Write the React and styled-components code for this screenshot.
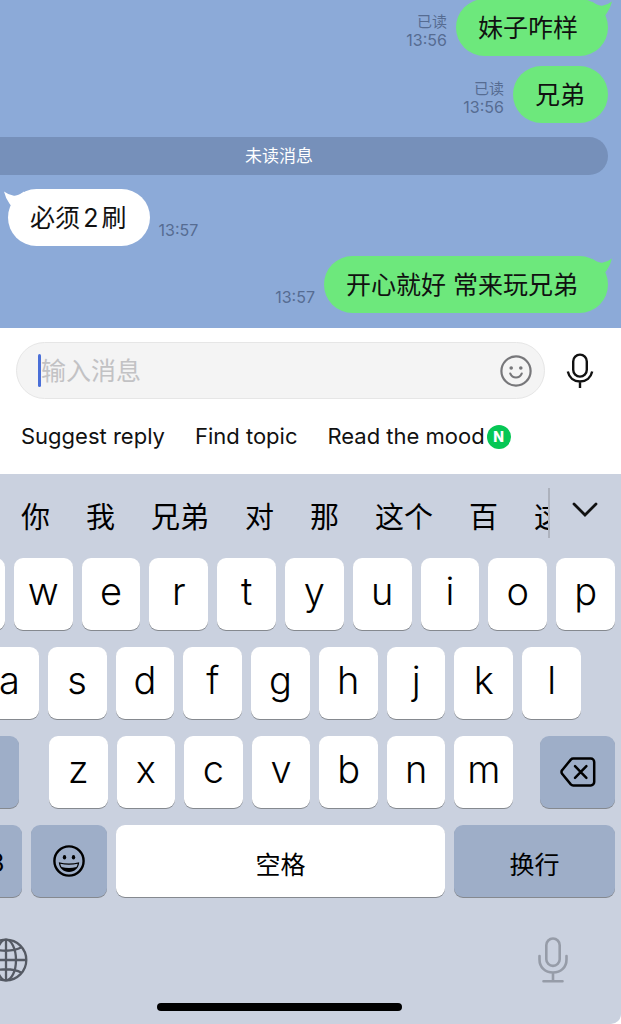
import { useState } from 'react'
import styled, { createGlobalStyle } from 'styled-components'

const GlobalStyle = createGlobalStyle`
  * {
    box-sizing: border-box;
  }

  body {
    margin: 0;
    background: #ffffff;
    font-family: Inter, "Noto Sans CJK SC", sans-serif;
    color: #111111;
  }

  button {
    font-family: inherit;
    color: inherit;
    border: none;
    padding: 0;
    background: none;
    cursor: pointer;
  }
`;

const Viewport = styled.div`
  overflow: hidden;
`;

/* The phone screen runs past the left edge of the window */
const Screen = styled.main`
  margin-left: -62px;
`;

const Chat = styled.section`
  display: flex;
  flex-direction: column;
  gap: 10px;
  margin-top: -1px;
  padding: 0 13px 15px 70px;
  background: #8caad8;
`;

const MessageRow = styled.div`
  display: flex;
  flex-direction: ${props => props.$mine ? 'row-reverse' : 'row'};
  align-items: flex-end;
  gap: 9px;
`;

const Bubble = styled.div`
  position: relative;
  padding: 13px ${props => props.$mine && props.$tail ? '30px' : '23px'} 11px 22px;
  border-radius: 29px;
  background: ${props => props.$mine ? '#6de87c' : '#ffffff'};
  font-size: 25px;
  line-height: 33px;
  white-space: nowrap;
  text-autospace: normal;
`;

const Tail = styled.svg`
  position: absolute;
  top: 0;
  ${props => props.$mine ? 'right: -4px;' : 'left: -4px; transform: scaleX(-1);'}
  width: 28px;
  height: 20px;
  fill: ${props => props.$mine ? '#6de87c' : '#ffffff'};
`;

const Meta = styled.div`
  display: flex;
  flex-direction: column;
  align-items: flex-end;
  padding-bottom: 6px;
  font-size: 16px;
  line-height: 19px;
  color: #566c92;
`;

const ReadLabel = styled.span`
  font-size: 15px;
`;

const UnreadDivider = styled.div`
  margin: 4px 0 4px -58px;
  border-radius: 19px;
  background: #7690ba;
  color: #ffffff;
  font-size: 17px;
  line-height: 38px;
  text-align: center;
`;

const Composer = styled.section`
  padding: 14px 27px 22px 78px;
  background: #ffffff;
`;

const InputRow = styled.div`
  display: flex;
  align-items: center;
  gap: 21px;
`;

const InputBox = styled.div`
  flex: 1;
  display: flex;
  align-items: center;
  height: 57px;
  padding: 0 12px 0 21px;
  border: 1px solid #e6e6e6;
  border-radius: 29px;
  background: #f4f4f4;
`;

const Caret = styled.span`
  width: 3px;
  height: 33px;
  border-radius: 2px;
  background: #4a6fd8;
`;

const TextInput = styled.input`
  flex: 1;
  min-width: 0;
  height: 36px;
  padding: 0;
  border: none;
  outline: none;
  background: transparent;
  font-family: inherit;
  font-size: 25px;
  color: #111111;

  &::placeholder {
    color: #c2c2c4;
    opacity: 1;
  }
`;

const IconButton = styled.button`
  display: flex;
  color: ${props => props.$color || '#111111'};
`;

const Suggestions = styled.div`
  display: flex;
  align-items: center;
  gap: 30px;
  margin-top: 22px;
  padding-left: 5px;
`;

const Suggestion = styled.button`
  display: flex;
  align-items: center;
  gap: 2px;
  font-size: 22px;
  line-height: 31px;
  white-space: nowrap;
`;

const NewBadge = styled.span`
  width: 24px;
  border-radius: 12px;
  background: #06c755;
  color: #ffffff;
  font-size: 14px;
  font-weight: 800;
  line-height: 24px;
  text-align: center;
`;

const Keyboard = styled.section`
  background: #cad1df;
  color: #000000;
  border-bottom-right-radius: 10px;
`;

const CandidateBar = styled.div`
  display: flex;
  align-items: center;
  height: 84px;
  padding: 0 23px 6px 83px;
`;

const Candidates = styled.div`
  flex: 1;
  min-width: 0;
  display: flex;
  align-items: center;
  gap: 36px;
  height: 50px;
  padding-top: 10px;
  overflow: hidden;
  border-right: 2px solid #adb2bd;
`;

const Candidate = styled.button`
  flex: none;
  font-size: 29px;
  line-height: 40px;
`;

const ExpandButton = styled(IconButton)`
  margin-left: 22px;
  padding-bottom: 6px;
`;

const Keys = styled.div`
  display: flex;
  flex-direction: column;
  gap: 17px;
  padding: 0 6px 0 8px;
`;

const KeyRow = styled.div`
  display: flex;
  gap: 9px;
  padding: 0 ${props => props.$inset || 0}px;
`;

const LetterGroup = styled.div`
  flex: 1;
  display: flex;
  gap: 9px;
  margin: 0 18px 0 21px;
`;

const Key = styled.button`
  flex: ${props => props.$width ? `0 0 ${props.$width}px` : '1 1 0'};
  min-width: 0;
  display: flex;
  align-items: center;
  justify-content: center;
  height: 72px;
  border-radius: 9px;
  background: ${props => props.$dark ? '#9eaec8' : '#ffffff'};
  box-shadow: 0 1px 0 #85898f;
  font-size: 38px;
  font-weight: 350;
  padding-bottom: 7px;
`;

const LabelKey = styled(Key)`
  font-size: 25px;
  font-weight: 400;
  padding: 3px 0 0;
`;

const IconKey = styled(Key)`
  padding: 0;
`;

const KeyboardFooter = styled.div`
  display: flex;
  align-items: center;
  justify-content: space-between;
  padding: 40px 53px 20px 46px;
`;

const HomeIndicator = styled.div`
  width: 245px;
  height: 8px;
  margin: 0 auto;
  border-radius: 4px;
  background: #000000;
`;

const HomeArea = styled.div`
  padding-bottom: 13px;
`;

const messages = [
  { id: 1, text: '妹子咋样', time: '13:56', mine: true, read: true, tail: true },
  { id: 2, text: '兄弟', time: '13:56', mine: true, read: true, tail: false },
  { id: 3, text: '必须2刷', time: '13:57', mine: false, read: false, tail: true },
  { id: 4, text: '开心就好 常来玩兄弟', time: '13:57', mine: true, read: false, tail: true },
]

const candidates = ['你', '我', '兄弟', '对', '那', '这个', '百', '这']

const SmileIcon = () => (
  <svg width="32" height="32" viewBox="0 0 32 32" fill="none" stroke="currentColor" strokeWidth="2.2">
    <circle cx="16" cy="16" r="14.6" />
    <path d="M10.3 18.6c1.2 2.6 3.2 3.9 5.7 3.9s4.5-1.3 5.7-3.9" strokeLinecap="round" />
    <circle cx="11.2" cy="13" r="1.8" fill="currentColor" stroke="none" />
    <circle cx="20.8" cy="13" r="1.8" fill="currentColor" stroke="none" />
  </svg>
)

const MicIcon = () => (
  <svg width="28" height="36" viewBox="0 0 28 36" fill="none" stroke="currentColor" strokeWidth="2.4">
    <rect x="7.2" y="1.6" width="13.6" height="22" rx="6.8" />
    <path d="M1.8 18.5c1.3 6 6 10 12.2 10s10.9-4 12.2-10M14 28.500v6.500" />
  </svg>
)

const ChevronIcon = () => (
  <svg width="26" height="16" viewBox="0 0 26 16" fill="none" stroke="currentColor" strokeWidth="2.8">
    <path d="M2 2l11 11L24 2" strokeLinecap="round" />
  </svg>
)

const BackspaceIcon = () => (
  <svg width="36" height="30" viewBox="0 0 36 30" fill="none" stroke="currentColor" strokeWidth="2.5" strokeLinecap="round" strokeLinejoin="round">
    <path d="M13.2 1.6h17.6a3.4 3.4 0 0 1 3.4 3.4v20a3.4 3.4 0 0 1-3.4 3.4H13.2a3.4 3.4 0 0 1-2.4-1L2.3 17a2.8 2.8 0 0 1 0-4l8.500-10.400a3.4 3.4 0 0 1 2.4-1z" />
    <path d="M15 9.2l11.4 11.6M26.4 9.2L15 20.8" />
  </svg>
)

const GrinIcon = () => (
  <svg width="32" height="32" viewBox="0 0 32 32" fill="none" stroke="currentColor" strokeWidth="2.4">
    <circle cx="16" cy="16" r="14.6" />
    <ellipse cx="11.5" cy="12.2" rx="1.7" ry="2.2" fill="currentColor" stroke="none" />
    <ellipse cx="20.5" cy="12.2" rx="1.7" ry="2.2" fill="currentColor" stroke="none" />
    <path d="M5.8 17.2c6.6 1.7 13.8 1.7 20.4 0c-.3 5.8-4.7 9.800-10.200 9.800s-9.900-4-10.200-9.800z" fill="currentColor" stroke="none" />
    <path d="M7.300 18.800c5.700 1.300 11.700 1.300 17.400 0c-.2 1.300-.6 2.400-1.200 3.300c-4.900 1.200-10.100 1.200-15 0c-.6-.9-1-2-1.200-3.300z" fill="#9eaec8" stroke="none" />
  </svg>
)

const GlobeIcon = () => (
  <svg width="44" height="44" viewBox="0 0 44 44" fill="none" stroke="currentColor" strokeWidth="2.3">
    <circle cx="22" cy="22" r="20.3" />
    <ellipse cx="22" cy="22" rx="10" ry="20.3" />
    <path d="M22 1.7v40.6M1.7 22h40.6M6.5 9.3c8.5 4.6 22.5 4.6 31 0M6.5 34.7c8.5-4.600 22.500-4.600 31 0" />
  </svg>
)

const DictationIcon = () => (
  <svg width="30" height="46" viewBox="0 0 30 46" fill="none" stroke="currentColor" strokeWidth="2.6" strokeLinecap="round">
    <rect x="8.3" y="1.5" width="13.4" height="27.4" rx="6.7" />
    <path d="M1.5 19v3.5c0 7.8 5.5 13 13.5 13s13.5-5.2 13.5-13V19M15 35.5v8.5M5.5 44.2h19" />
  </svg>
)

const Message = ({ message }) => (
  <MessageRow $mine={message.mine}>
    <Bubble $mine={message.mine} $tail={message.tail}>
      {message.tail && (
        <Tail $mine={message.mine} viewBox="0 0 28 20" aria-hidden="true">
          <path d="M8 2.600Q14 7.500 19 6.500Q24 5.500 28 2.500Q26.500 9 22.600 14.500L20 18L8 18Z" />
        </Tail>
      )}
      {message.text}
    </Bubble>
    <Meta>
      {message.read && <ReadLabel>已读</ReadLabel>}
      <time>{message.time}</time>
    </Meta>
  </MessageRow>
)

const letterKeys = (letters) =>
  letters.split('').map(letter => <Key key={letter} type="button">{letter}</Key>)

const App = () => {
  const [draft, setDraft] = useState('')

  return (
    <Viewport>
      <GlobalStyle />
      <Screen>
        <Chat>
          {messages.slice(0, 2).map(message => <Message key={message.id} message={message} />)}
          <UnreadDivider>未读消息</UnreadDivider>
          {messages.slice(2).map(message => <Message key={message.id} message={message} />)}
        </Chat>

        <Composer>
          <InputRow>
            <InputBox>
              <Caret />
              <TextInput
                type="text"
                aria-label="输入消息"
                placeholder="输入消息"
                value={draft}
                onChange={(e) => setDraft(e.target.value)}
              />
              <IconButton type="button" aria-label="表情" $color="#77777a"><SmileIcon /></IconButton>
            </InputBox>
            <IconButton type="button" aria-label="语音"><MicIcon /></IconButton>
          </InputRow>
          <Suggestions>
            <Suggestion type="button">Suggest reply</Suggestion>
            <Suggestion type="button">Find topic</Suggestion>
            <Suggestion type="button">Read the mood<NewBadge>N</NewBadge></Suggestion>
          </Suggestions>
        </Composer>

        <Keyboard>
          <CandidateBar>
            <Candidates>
              {candidates.map(word => <Candidate key={word} type="button">{word}</Candidate>)}
            </Candidates>
            <ExpandButton type="button" aria-label="展开"><ChevronIcon /></ExpandButton>
          </CandidateBar>

          <Keys>
            <KeyRow>{letterKeys('qwertyuiop')}</KeyRow>
            <KeyRow $inset={34}>{letterKeys('asdfghjkl')}</KeyRow>
            <KeyRow>
              <IconKey type="button" aria-label="大写" $dark $width={73} />
              <LetterGroup>{letterKeys('zxcvbnm')}</LetterGroup>
              <IconKey type="button" aria-label="删除" $dark $width={75}><BackspaceIcon /></IconKey>
            </KeyRow>
            <KeyRow>
              <LabelKey type="button" $dark $width={76}>123</LabelKey>
              <IconKey type="button" aria-label="表情键盘" $dark $width={76}><GrinIcon /></IconKey>
              <LabelKey type="button">空格</LabelKey>
              <LabelKey type="button" $dark $width={161}>换行</LabelKey>
            </KeyRow>
          </Keys>

          <KeyboardFooter>
            <IconButton type="button" aria-label="切换键盘" $color="#555a64"><GlobeIcon /></IconButton>
            <IconButton type="button" aria-label="听写" $color="#969ca8"><DictationIcon /></IconButton>
          </KeyboardFooter>
          <HomeArea>
            <HomeIndicator />
          </HomeArea>
        </Keyboard>
      </Screen>
    </Viewport>
  )
}

export default App
